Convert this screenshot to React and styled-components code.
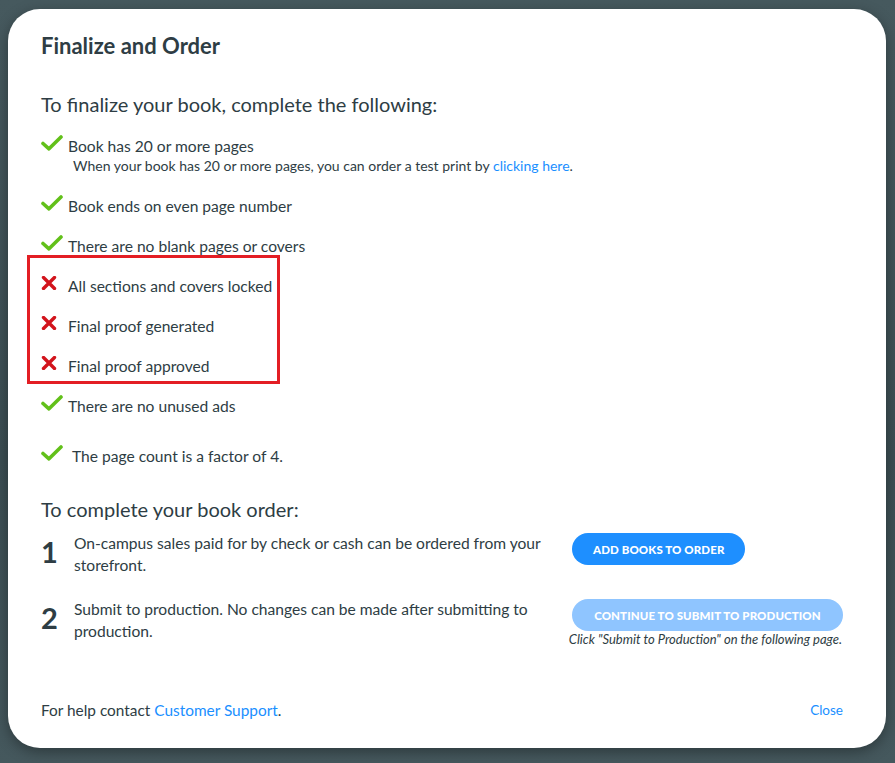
import React from 'react'
import styled, { createGlobalStyle } from 'styled-components'

const GlobalStyle = createGlobalStyle`
  html, body {
    margin: 0;
    padding: 0;
  }
  body {
    font-family: Lato, "Open Sans", sans-serif;
    background: #3f5257;
    color: #2e3d44;
  }
`

const Backdrop = styled.div`
  width: 895px;
  height: 763px;
  box-sizing: border-box;
  padding: 9px 9px 15px 8px;
  background: linear-gradient(180deg, #46595e 0%, #3c4e53 60%, #45585d 100%);
`

const Modal = styled.div`
  height: 100%;
  box-sizing: border-box;
  background: #fff;
  border-radius: 32px;
  box-shadow: 0 4px 14px rgba(0, 0, 0, 0.35);
  padding: 25px 43px 29px 33px;
  display: flex;
  flex-direction: column;
`

const Title = styled.h1`
  margin: 0;
  font-size: 22px;
  font-weight: 700;
  line-height: 24px;
`

const Heading = styled.h2`
  margin: ${p => p.$top}px 0 0;
  font-size: 20px;
  font-weight: 400;
  line-height: 24px;
`

const CheckList = styled.ul`
  list-style: none;
  margin: 20px 0 0;
  padding: 0;
  display: flex;
  flex-direction: column;
  gap: 20px;
`

const Flagged = styled.div`
  display: flex;
  flex-direction: column;
  gap: 20px;
  border: 3px solid #e31e24;
  margin: -21px 0 -8px -14px;
  width: 236px;
  padding: 18px 0 5px 11px;
`

const Item = styled.li`
  display: flex;
  align-items: flex-start;
  margin-top: ${p => (p.$spaced ? '10px' : '0')};
`

const Icon = styled.span`
  width: 27px;
  height: 20px;
  flex: none;
  display: flex;
  align-items: flex-start;
  padding-top: ${p => (p.$cross ? '1px' : '0')};
  margin-top: -1px;
  svg {
    display: block;
  }
`

const ItemText = styled.div`
  font-size: 15.6px;
  line-height: 20px;
  padding-left: ${p => (p.$shift ? '4px' : '0')};
`

const SubText = styled.div`
  font-size: 14px;
  line-height: 20px;
  padding-left: 5px;
`

const Link = styled.a`
  color: #1a8fff;
  text-decoration: none;
  cursor: pointer;
`

const Steps = styled.div`
  margin-top: 10px;
  display: flex;
  flex-direction: column;
  gap: 21px;
`

const Step = styled.div`
  display: grid;
  grid-template-columns: 33px 498px minmax(0, 1fr);
  align-items: start;
`

const Num = styled.div`
  font-size: 29px;
  font-weight: 700;
  line-height: 36px;
  padding-top: 3px;
`

const StepText = styled.div`
  font-size: 15.6px;
  line-height: 22px;
  padding-top: 1px;
`

const Action = styled.div`
  display: flex;
  flex-direction: column;
  align-items: flex-end;
  justify-self: ${p => (p.$fill ? 'stretch' : 'start')};
  padding-top: 2px;
`

const PillButton = styled.button`
  height: 32px;
  padding: 0 21px;
  border: none;
  border-radius: 16px;
  background: ${p => (p.$disabled ? '#8fc5ff' : '#1e8fff')};
  color: #fff;
  font-family: Lato, sans-serif;
  font-size: 11.5px;
  font-weight: 900;
  letter-spacing: 0.1px;
  text-transform: uppercase;
  cursor: pointer;
  align-self: ${p => (p.$wide ? 'stretch' : 'flex-start')};
`

const Caption = styled.div`
  font-size: 13px;
  font-style: italic;
  line-height: 17px;
  margin-right: 1px;
  white-space: nowrap;
`

const Footer = styled.div`
  margin-top: auto;
  display: flex;
  justify-content: space-between;
  align-items: center;
  font-size: 15.4px;
`

const CloseLink = styled(Link)`
  font-size: 13.5px;
`

const Check = () => (
  <svg width="22" height="16" viewBox="0 0 22 16">
    <path d="M2 8.5 L8 13.8 L20 2" fill="none" stroke="#62c01a" strokeWidth="3.6" strokeLinecap="round" strokeLinejoin="round" />
  </svg>
)

const Cross = () => (
  <svg width="16" height="14" viewBox="0 0 16 14">
    <path d="M2.5 1.5 L13.5 12.5 M13.5 1.5 L2.5 12.5" fill="none" stroke="#d2141c" strokeWidth="3.4" strokeLinecap="round" />
  </svg>
)

const passed = ['Book ends on even page number', 'There are no blank pages or covers']

const failed = ['All sections and covers locked', 'Final proof generated', 'Final proof approved']

export default function App() {
  return (
    <>
      <GlobalStyle />
      <Backdrop>
        <Modal>
          <Title>Finalize and Order</Title>
          <Heading $top={34}>To finalize your book, complete the following:</Heading>
          <CheckList>
            <Item>
              <Icon><Check /></Icon>
              <div>
                <ItemText>Book has 20 or more pages</ItemText>
                <SubText>
                  When your book has 20 or more pages, you can order a test print by <Link>clicking here</Link>.
                </SubText>
              </div>
            </Item>
            {passed.map(text => (
              <Item key={text}>
                <Icon><Check /></Icon>
                <ItemText>{text}</ItemText>
              </Item>
            ))}
            <Flagged>
              {failed.map(text => (
                <Item key={text}>
                  <Icon $cross><Cross /></Icon>
                  <ItemText>{text}</ItemText>
                </Item>
              ))}
            </Flagged>
            <Item>
              <Icon><Check /></Icon>
              <ItemText>There are no unused ads</ItemText>
            </Item>
            <Item $spaced>
              <Icon><Check /></Icon>
              <ItemText $shift>The page count is a factor of 4.</ItemText>
            </Item>
          </CheckList>
          <Heading $top={31}>To complete your book order:</Heading>
          <Steps>
            <Step>
              <Num>1</Num>
              <StepText>On-campus sales paid for by check or cash can be ordered from your storefront.</StepText>
              <Action>
                <PillButton>Add books to order</PillButton>
              </Action>
            </Step>
            <Step>
              <Num>2</Num>
              <StepText>Submit to production. No changes can be made after submitting to production.</StepText>
              <Action $fill>
                <PillButton $disabled $wide>Continue to submit to production</PillButton>
                <Caption>Click "Submit to Production" on the following page.</Caption>
              </Action>
            </Step>
          </Steps>
          <Footer>
            <span>For help contact <Link>Customer Support</Link>.</span>
            <CloseLink>Close</CloseLink>
          </Footer>
        </Modal>
      </Backdrop>
    </>
  )
}
